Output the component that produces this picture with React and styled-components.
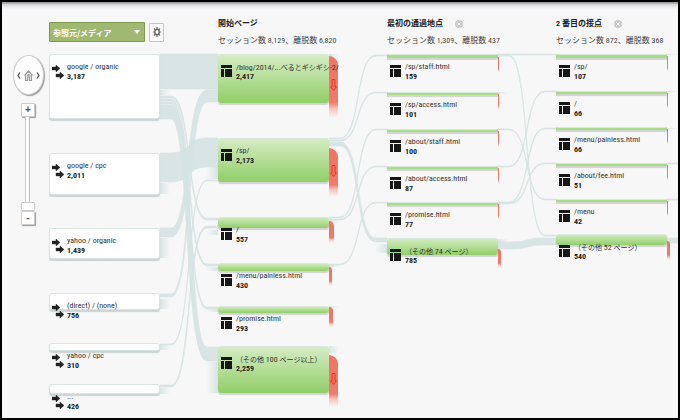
import styled, { createGlobalStyle } from "styled-components";

const GlobalStyle = createGlobalStyle`
    * {
        box-sizing: border-box;
    }
    body {
        margin: 0;
        background-color: #f7f7f7;
        font-family: "Roboto Condensed", "Liberation Sans", "Noto Sans CJK JP", sans-serif;
        font-size: 8px;
        line-height: 10px;
        color: #444;
    }
`;

const Frame = styled.main`
    min-height: 100vh;
    padding-top: 16px;
    border: 2px solid #000;
    overflow: hidden;
    background: linear-gradient(#8f8c8f, #dedddf 3px, #f7f7f7 7px);
`;
const Columns = styled.div`
    display: grid;
    grid-template-columns: repeat(4, 169px);
    position: relative;
`;
const Header = styled.header`
    padding-left: 47px;
    height: 36px;
`;
const Toolbar = styled.div`
    display: flex;
    align-items: center;
    gap: 4px;
    height: 28px;
`;
const SelectBox = styled.label`
    position: relative;
    display: flex;
    width: 96px;
    height: 20px;
    &::after {
        content: "";
        position: absolute;
        right: 5px;
        top: 8px;
        border: 3px solid transparent;
        border-top: 4px solid #fff;
        border-bottom: none;
    }
`;
const Select = styled.select`
    appearance: none;
    width: 100%;
    padding: 0 3px;
    border: 1px solid #7d9550;
    border-radius: 1px;
    background-color: #9fb970;
    color: #fff;
    font-family: "Noto Sans CJK JP", sans-serif;
    font-size: 8px;
    font-weight: 700;
`;
const GearButton = styled.button`
    display: flex;
    align-items: center;
    justify-content: center;
    width: 15px;
    height: 19px;
    padding: 0;
    border: 1px solid #c4c4c4;
    border-radius: 1px;
    background-color: #fafafa;
    color: #666;
`;
const TitleRow = styled.div`
    display: flex;
    align-items: center;
    gap: 12px;
    height: 12px;
`;
const Title = styled.h2`
    margin: 0;
    font-size: 8px;
    font-weight: 700;
    line-height: 12px;
    color: #222;
    white-space: nowrap;
`;
const Summary = styled.p`
    margin: 5px 0 0;
    line-height: 12px;
    color: #444;
    white-space: nowrap;
`;
const CloseButton = styled.button`
    display: flex;
    padding: 0;
    border: none;
    background: none;
`;

const Body = styled.div`
    display: grid;
    grid-template-columns: 47px 1fr;
`;
const Sidebar = styled.nav`
    display: flex;
    flex-direction: column;
    align-items: center;
    padding: 1px 0 0 5px;
`;
const PanPad = styled.div`
    display: flex;
    align-items: center;
    justify-content: space-between;
    width: 31px;
    height: 40px;
    margin-bottom: 8px;
    padding: 0 3px;
    border: 1px solid #ccc;
    border-radius: 50%;
    background-color: #fdfdfd;
    box-shadow: 1px 1px 1px #999;
`;
const PanButton = styled.button`
    display: flex;
    padding: 0;
    border: none;
    background: none;
`;
const ZoomButton = styled.button`
    width: 14px;
    height: 14px;
    padding: 0;
    border: 1px solid #ccc;
    border-radius: 1px;
    background-color: #fff;
    box-shadow: 1px 1px 1px #999;
    font-family: "Liberation Sans", sans-serif;
    font-size: 10px;
    font-weight: 700;
    line-height: 12px;
    color: #555;
`;
const ZoomSlider = styled.input`
    appearance: none;
    writing-mode: vertical-lr;
    direction: rtl;
    width: 14px;
    height: 94px;
    margin: 0;
    background: linear-gradient(90deg, transparent 4px, #ccc 4px, #ccc 5px, #fff 5px, #fff 8px, #bbb 8px, #bbb 9px, transparent 9px);
    &::-webkit-slider-thumb {
        appearance: none;
        width: 14px;
        height: 9px;
        border: 1px solid #ccc;
        border-radius: 1px;
        background-color: #fff;
    }
`;

const FlowLayer = styled.svg`
    position: absolute;
    left: 0;
    top: 0;
    width: 100%;
    height: 362px;
    overflow: visible;
`;
const NodeList = styled.ul`
    position: relative;
    height: 362px;
    margin: 0;
    padding: 0;
    list-style: none;
`;
const Node = styled.li`
    position: absolute;
    left: 0;
    top: ${(props) => props.$top}px;
    width: 111px;
`;
const Bar = styled.div`
    position: absolute;
    left: 0;
    top: 0;
    width: 100%;
    height: ${(props) => props.$height}px;
    border: 1px solid ${(props) => (props.$source ? "#d9e5e5" : "transparent")};
    border-top-color: #d9e7df;
    border-radius: ${(props) => (props.$height > 5 ? 3 : 0)}px;
    background: ${(props) =>
      props.$source
        ? "#fff"
        : props.$height > 5
          ? "linear-gradient(#d6edc6, #92ce68) border-box"
          : "#a9dc86 border-box"};
    box-shadow: 0 2px 1px ${(props) => (props.$source ? "#ccd3d3" : "#d0d3d0")};
`;
const Exit = styled.div`
    position: absolute;
    left: 111px;
    top: ${(props) => props.$top}px;
    display: flex;
    align-items: center;
    justify-content: center;
    width: ${(props) => props.$width}px;
    height: ${(props) => props.$height}px;
    padding-bottom: 4px;
    border-top-right-radius: ${(props) => (props.$width > 1 ? props.$width : 0)}px;
    background: linear-gradient(#ee7566, #f07a6c 75%, #f7c5bf 85%, transparent);
`;
const Label = styled.div`
    position: relative;
    display: flex;
    gap: ${(props) => (props.$source ? 3 : 4)}px;
    padding: 8px 0 0 3px;
    white-space: nowrap;
    svg {
        flex: none;
        margin-top: 3px;
    }
`;
const Name = styled.div`
    height: 10px;
    color: #333;
`;
const Ja = styled.span`
    font-family: "Noto Sans CJK JP", sans-serif;
    font-size: 7px;
`;
const Count = styled.div`
    color: #222;
    font-weight: 700;
`;

const PITCH = 169;
const NODE_WIDTH = 111;

const columns = [
  {
    source: true,
    nodes: [
      { top: 0, height: 65, name: "google / organic", count: "3,187" },
      { top: 99, height: 42, name: "google / cpc", count: "2,011" },
      { top: 174, height: 31, name: "yahoo / organic", count: "1,439" },
      { top: 239, height: 17, name: "(direct) / (none)", count: "756" },
      { top: 289, height: 8, name: "yahoo / cpc", count: "310" },
      { top: 330, height: 10, name: "...", count: "426" },
    ],
  },
  {
    title: "開始ページ",
    sessions: "8,129",
    drops: "6,820",
    nodes: [
      { top: 0, height: 49, name: <>/blog/2014/...<Ja>べるとギシギシ</Ja>-2/</>, count: "2,417", exit: [2, 9, 62] },
      { top: 84, height: 44, name: "/sp/", count: "2,173", exit: [10, 9, 49] },
      { top: 163, height: 11, name: "/", count: "557", exit: [4, 5, 22] },
      { top: 209, height: 8, name: "/menu/painless.html", count: "430", exit: [4, 3, 19] },
      { top: 252, height: 7, name: "/promise.html", count: "293", exit: [1, 4, 20] },
      { top: 292, height: 47, name: <><Ja>（その他</Ja> 100 <Ja>ページ以上）</Ja></>, count: "2,259", exit: [9, 9, 52] },
    ],
  },
  {
    title: "最初の通過地点",
    sessions: "1,309",
    drops: "437",
    closable: true,
    nodes: [
      { top: 0, height: 4, name: "/sp/staff.html", count: "159", exit: [3, 1, 16] },
      { top: 38, height: 3, name: "/sp/access.html", count: "101", exit: [2, 1, 16] },
      { top: 75, height: 3, name: "/about/staff.html", count: "100", exit: [2, 1, 16] },
      { top: 112, height: 3, name: "/about/access.html", count: "87", exit: [2, 1, 16] },
      { top: 148, height: 3, name: "/promise.html", count: "77", exit: [2, 1, 16] },
      { top: 184, height: 17, name: <><Ja>（その他</Ja> 74 <Ja>ページ）</Ja></>, count: "785", exit: [11, 3, 19] },
    ],
  },
  {
    title: "2 番目の接点",
    sessions: "872",
    drops: "368",
    closable: true,
    nodes: [
      { top: 0, height: 4, name: "/sp/", count: "107", exit: [2, 1, 16] },
      { top: 37, height: 3, name: "/", count: "66", exit: [2, 1, 16] },
      { top: 73, height: 3, name: "/menu/painless.html", count: "66", exit: [2, 1, 16] },
      { top: 109, height: 3, name: "/about/fee.html", count: "51", exit: [2, 1, 16] },
      { top: 145, height: 3, name: "/menu", count: "42", exit: [2, 1, 16] },
      { top: 180, height: 11, name: <><Ja>（その他</Ja> 52 <Ja>ページ）</Ja></>, count: "540", exit: [7, 3, 19] },
    ],
  },
];

// [column, start y, end y, thickness]
const flows = [
  [0, 0, 0, 35],
  [0, 42, 164, 2],
  [0, 45, 210, 2],
  [0, 48, 253, 2],
  [0, 51, 293, 14],
  [0, 99, 84, 29],
  [0, 174, 36, 9],
  [0, 240, 45, 3],
  [0, 290, 126, 1],
  [0, 331, 172, 2],
  [1, 84, 1, 1],
  [1, 86, 38, 1],
  [1, 88, 184, 4],
  [1, 163, 75, 1],
  [1, 165, 112, 1],
  [1, 210, 148, 1],
  [2, 0, 0, 1],
  [2, 1, 181, 1],
  [2, 75, 145, 1],
  [2, 112, 37, 1],
  [2, 148, 74, 1],
  [2, 149, 109, 1],
  [2, 188, 184, 7],
  [3, 109, 109, 1],
  [3, 145, 145, 1],
  [3, 184, 184, 5],
];

// [x, y, height], fading away to the right of a node
const outStubs = [
  [111, 36, 5], [111, 129, 11], [111, 184, 20], [111, 245, 10], [111, 290, 6], [111, 334, 6],
  [280, 0, 3], [280, 165, 4], [280, 210, 3], [280, 252, 2], [280, 292, 7],
  [449, 38, 2], [449, 185, 3],
  [618, 0, 1], [618, 37, 1], [618, 74, 1],
];

// [x, y, height], fading in on the left of a node
const inStubs = [
  [157, 113, 12], [157, 176, 5], [157, 213, 4], [157, 255, 3], [157, 308, 31],
  [326, 190, 9],
];

const ribbon = ([column, from, to, size]) => {
  const x1 = column * PITCH + NODE_WIDTH;
  const x2 = (column + 1) * PITCH;
  const a = x1 + 11;
  const b = x2 - 11;
  const mid = (x1 + x2) / 2;
  // the steep ribbons would get too thin in the middle
  const spread = Math.abs(to - from) > 30 ? (size / 6) * Math.sign(to - from) : 0;
  return `M${x1} ${from}H${a}C${mid + spread + 3} ${from} ${mid + spread - 3} ${to} ${b} ${to}H${x2}v${size}H${b}C${mid - spread - 3} ${to + size} ${mid - spread + 3} ${from + size} ${a} ${from + size}H${x1}Z`;
};

const SourceIcon = () => (
  <svg width="12" height="14" viewBox="0 0 12 14" fill="#222">
    <path d="M0 2h4V0l4 3.500L4 7V5H0zM4 9h4V7l4 3.500L8 14v-2H4z" stroke="#222" strokeWidth="0.400" />
  </svg>
);

const PageIcon = () => (
  <svg width="11" height="12" viewBox="0 0 11 12" fill="#161616">
    <path d="M0 0h11v3H0zM0 4h3v8H0zM4 4h7v8H4z" />
  </svg>
);

const ExitArrow = () => (
  <svg width="7" height="12" viewBox="0 0 7 12" fill="none" stroke="#ff2a20">
    <path d="M2 .5h3V8h1.300L3.500 11.300.7 8H2z" />
  </svg>
);

const Chevron = ({ d }) => (
  <svg width="4" height="7" viewBox="0 0 4 7" fill="none" stroke="#444" strokeWidth="1.200">
    <path d={d} />
  </svg>
);

const FlowNode = ({ node, source }) => (
  <Node $top={node.top}>
    <Bar $height={node.height} $source={source} />
    {node.exit && (
      <Exit $top={node.exit[0]} $width={node.exit[1]} $height={node.exit[2]}>
        {node.exit[1] > 5 && <ExitArrow />}
      </Exit>
    )}
    <Label $source={source}>
      {source ? <SourceIcon /> : <PageIcon />}
      <div>
        <Name>{node.name}</Name>
        <Count>{node.count}</Count>
      </div>
    </Label>
  </Node>
);

const ColumnHeader = ({ column }) => (
  <div>
    <TitleRow>
      <Title>{column.title}</Title>
      {column.closable && (
        <CloseButton aria-label="閉じる">
          <svg width="8" height="8" viewBox="0 0 8 8">
            <circle cx="4" cy="4" r="4" fill="#c9c9c9" />
            <path d="M2.500 2.500l3 3m0-3l-3 3" stroke="#fff" />
          </svg>
        </CloseButton>
      )}
    </TitleRow>
    <Summary>
      セッション数 {column.sessions}、離脱数 {column.drops}
    </Summary>
  </div>
);

const App = () => {
  return (
    <Frame>
      <GlobalStyle />
      <Header>
        <Columns>
          <Toolbar>
            <SelectBox>
              <Select aria-label="ディメンション">
                <option>参照元/メディア</option>
              </Select>
            </SelectBox>
            <GearButton aria-label="設定">
              <svg width="8" height="10" viewBox="0 0 8 10" fill="none" stroke="currentColor">
                <ellipse cx="4" cy="5" rx="2.200" ry="2.700" strokeWidth="1.400" />
                <path d="M4 0v2M4 8v2M0 5h1.500M6.500 5H8M1 1.500l1.200 1.300M7 1.500L5.800 2.800M1 8.500l1.200-1.300M7 8.500L5.800 7.200" strokeWidth="1.200" />
              </svg>
            </GearButton>
          </Toolbar>
          {columns.slice(1).map((column) => (
            <ColumnHeader key={column.title} column={column} />
          ))}
        </Columns>
      </Header>
      <Body>
        <Sidebar>
          <PanPad>
            <PanButton aria-label="左へ">
              <Chevron d="M3 .5L1 3.500l2 3" />
            </PanButton>
            <PanButton aria-label="ホーム">
              <svg width="9" height="11" viewBox="0 0 9 11" fill="none" stroke="#999">
                <path d="M.5 5.500l4-4.500 4 4.500M1.500 5.500v5h2V7h2v3.500h2v-5" strokeWidth="1.200" />
                <path d="M2.500 5.500L4.500 3.500l2 2v1h-4z" fill="#aaa" stroke="none" />
              </svg>
            </PanButton>
            <PanButton aria-label="右へ">
              <Chevron d="M1 .5l2 3-2 3" />
            </PanButton>
          </PanPad>
          <ZoomButton>+</ZoomButton>
          <ZoomSlider type="range" min="0" max="10" defaultValue="0" aria-label="ズーム" />
          <ZoomButton>-</ZoomButton>
        </Sidebar>
        <Columns>
          <FlowLayer>
            <defs>
              <linearGradient id="fadeOut">
                <stop offset="0" stopColor="#d8e4e4" />
                <stop offset="1" stopColor="#d8e4e4" stopOpacity="0" />
              </linearGradient>
              <linearGradient id="fadeIn">
                <stop offset="0" stopColor="#d8e4e4" stopOpacity="0" />
                <stop offset="1" stopColor="#d8e4e4" />
              </linearGradient>
            </defs>
            {outStubs.map(([x, y, height]) => (
              <rect key={`${x}-${y}`} x={x} y={y} width="10" height={height} fill="url(#fadeOut)" />
            ))}
            {inStubs.map(([x, y, height]) => (
              <rect key={`${x}-${y}`} x={x} y={y} width="12" height={height} fill="url(#fadeIn)" />
            ))}
            {flows.map((flow) => (
              <path key={flow.join("-")} d={ribbon(flow)} fill="#d6e3e3" stroke="#d6e3e3" strokeWidth="0.700" opacity="0.900" />
            ))}
          </FlowLayer>
          {columns.map((column, i) => (
            <NodeList key={i}>
              {column.nodes.map((node) => (
                <FlowNode key={node.top} node={node} source={column.source} />
              ))}
            </NodeList>
          ))}
        </Columns>
      </Body>
    </Frame>
  );
};

export default App;
